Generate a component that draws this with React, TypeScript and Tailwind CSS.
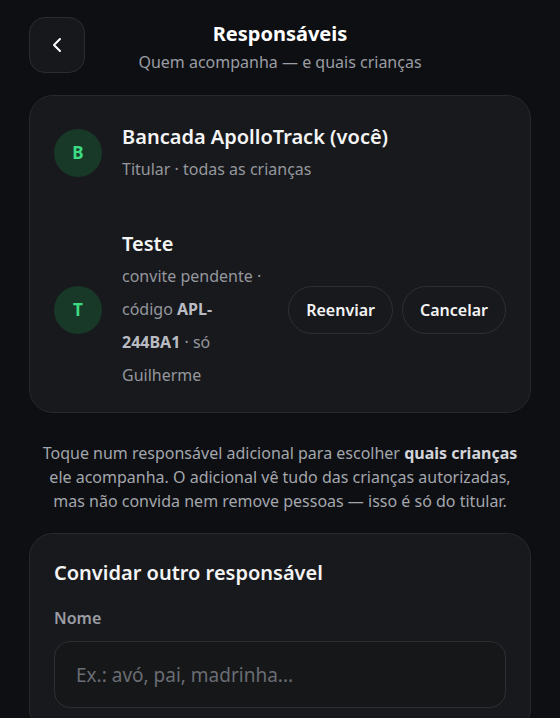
import { ChevronLeft } from 'lucide-react'

const font = { fontFamily: '"Noto Sans", "Open Sans", sans-serif' }

function Avatar({ letter }: { letter: string }) {
  return (
    <div className="w-12 h-12 shrink-0 rounded-full bg-[#183828] flex items-center justify-center text-[17px] font-bold text-[#3ddc84]">
      {letter}
    </div>
  )
}

export default function App() {
  return (
    <div className="min-h-[718px] bg-[#0e0f12] text-white px-[29px] pt-[17px] pb-10" style={font}>
      {/* Header */}
      <div className="grid grid-cols-[56px_1fr_56px] items-start">
        <button className="w-14 h-14 rounded-2xl border border-[#2a2c31] bg-[#17181b] flex items-center justify-center">
          <ChevronLeft className="w-6 h-6 text-white" strokeWidth={2} />
        </button>
        <div className="text-center pt-[4px]">
          <h1 className="text-[20px] font-bold leading-[26px]">Responsáveis</h1>
          <p className="text-[16px] text-[#9a9da4] leading-[22px] mt-[4px]">Quem acompanha — e quais crianças</p>
        </div>
        <div />
      </div>

      {/* Lista de responsáveis */}
      <div className="mt-[22px] rounded-3xl border border-[#26282c] bg-[#18191c] px-6 pt-6 pb-5">
        <div className="flex items-center gap-[20px]">
          <Avatar letter="B" />
          <div className="leading-[33px]">
            <div className="text-[20px] font-semibold text-[#f4f4f5]">Bancada ApolloTrack (você)</div>
            <div className="text-[16px] text-[#94979e]">Titular · todas as crianças</div>
          </div>
        </div>

        <div className="flex items-center gap-[20px] mt-[41px]">
          <Avatar letter="T" />
          <div className="flex-1 min-w-0 leading-[33px]">
            <div className="text-[20px] font-semibold text-[#f4f4f5]">Teste</div>
            <div className="text-[16px] text-[#94979e]">
              convite pendente · código <b className="font-bold text-[#b9bcc2]">APL-244BA1</b> · só Guilherme
            </div>
          </div>
          <div className="flex gap-[9px] shrink-0">
            <button className="h-12 px-[17px] rounded-full border border-[#2d2f34] text-[16px] font-semibold text-[#f4f4f5]">
              Reenviar
            </button>
            <button className="h-12 px-[17px] rounded-full border border-[#2d2f34] text-[16px] font-semibold text-[#f4f4f5]">
              Cancelar
            </button>
          </div>
        </div>
      </div>

      <p className="mt-[28px] px-2 text-center text-[16px] leading-6 text-[#a3a6ad]">
        Toque num responsável adicional para escolher <b className="font-bold text-[#d3d5da]">quais crianças</b> ele acompanha. O adicional vê tudo das crianças autorizadas, mas não convida nem remove pessoas — isso é só do titular.
      </p>

      {/* Convidar */}
      <div className="mt-[20px] rounded-3xl border border-[#26282c] bg-[#18191c] px-6 pt-6 pb-6">
        <h2 className="text-[20px] font-semibold leading-[30px] text-[#f4f4f5]">Convidar outro responsável</h2>
        <label className="block mt-[19px] text-[16px] font-semibold text-[#9a9da4] leading-[22px]">Nome</label>
        <input
          placeholder="Ex.: avó, pai, madrinha..."
          className="mt-[12px] w-full h-[67px] rounded-2xl border border-[#2d2f34] bg-[#161719] px-[21px] text-[19px] text-white placeholder:text-[#6a6d74] outline-none"
        />
      </div>
    </div>
  )
}
